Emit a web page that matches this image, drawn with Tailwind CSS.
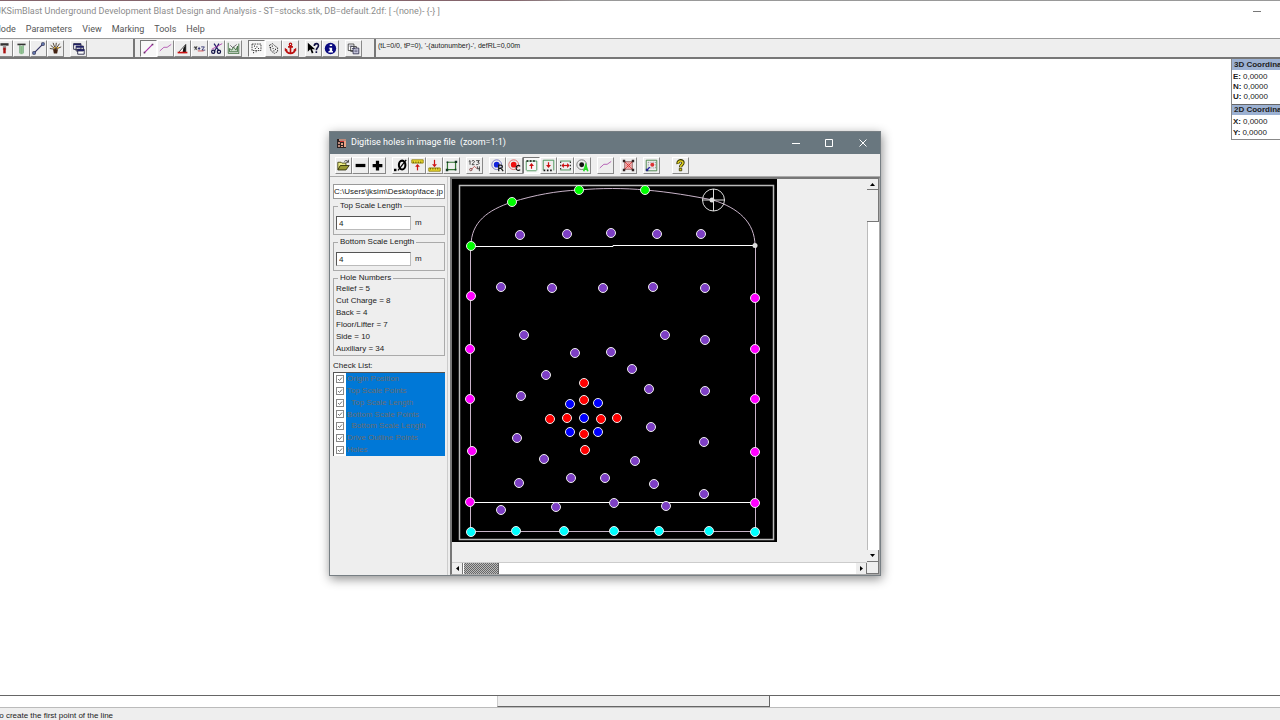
<!DOCTYPE html>
<html lang="en">
<head>
  <meta charset="UTF-8" />
  <meta name="viewport" content="width=device-width, initial-scale=1.0" />
  <title>JKSimBlast Underground Development</title>
  <script src="https://cdn.jsdelivr.net/npm/@tailwindcss/browser@4"></script>
</head>
<body class="bg-white font-['Liberation_Sans',sans-serif] text-[8px] text-[#222]">
  <div class="relative flex h-screen flex-col overflow-hidden">

    <!-- Title bar -->
    <div class="h-px shrink-0 bg-linear-to-r from-[#85656c] from-40% to-[#999] to-45%"></div>
    <header class="flex h-[21px] shrink-0 items-center justify-between overflow-hidden pr-[19px]">
      <h1 class="-ml-[4px] whitespace-pre font-[Roboto,sans-serif] text-[9px] text-[#8c8c8c]">JKSimBlast Underground Development Blast Design and Analysis - ST=stocks.stk, DB=default.2df: [ -(none)- {-} ]</h1>
      <button aria-label="Minimise" class="flex h-4 w-2 items-center"><span class="h-px w-2 bg-[#777]"></span></button>
    </header>

    <!-- Menu -->
    <nav class="-ml-[7px] flex h-4 shrink-0 items-center gap-[10px] font-[Roboto,sans-serif] text-[9px] text-[#555]">
      <a href="#">Mode</a>
      <a href="#">Parameters</a>
      <a href="#">View</a>
      <a href="#">Marking</a>
      <a href="#">Tools</a>
      <a href="#">Help</a>
    </nav>

    <!-- Main toolbar -->
    <div class="flex h-[21px] shrink-0 items-stretch border-t border-b-2 border-t-[#999] border-b-[#777] bg-[#eee]">
      <div class="-ml-1 flex w-[139px] items-center gap-[6px] border-r-2 border-[#777]">
        <div id="bar-a" class="flex"></div>
        <div id="bar-b" class="flex"></div>
      </div>
      <div class="flex items-center gap-[6px] border-r-2 border-[#777] pr-[12px] pl-[5px]">
        <div id="bar-c" class="flex"></div>
        <div id="bar-d" class="flex"></div>
        <div id="bar-e" class="flex"></div>
        <div id="bar-f" class="flex"></div>
      </div>
      <p class="pt-px pl-[2px] text-[7px] leading-[12px]">(tL=0/0, tP=0), '-(autonumber)-', defRL=0,00m</p>
    </div>

    <!-- Workspace -->
    <main class="flex flex-1 items-start justify-end">
      <aside class="w-[49px] overflow-hidden border-b border-l border-[#888] whitespace-nowrap">
        <h2 class="h-[11px] bg-[#9cb1d2] pl-[2px] leading-[11px] font-bold">3D Coordinates</h2>
        <dl class="flex flex-col pt-[2px] pb-[2px] pl-px leading-[10px]">
          <div class="flex gap-[2px]"><dt class="font-bold">E:</dt><dd>0,0000</dd></div>
          <div class="flex gap-[2px]"><dt class="font-bold">N:</dt><dd>0,0000</dd></div>
          <div class="flex gap-[2px]"><dt class="font-bold">U:</dt><dd>0,0000</dd></div>
        </dl>
        <h2 class="h-[11px] border-t border-[#666] bg-[#9cb1d2] pl-[2px] leading-[10px] font-bold">2D Coordinates</h2>
        <dl class="flex flex-col py-px pl-px leading-[11px]">
          <div class="flex gap-[2px]"><dt class="font-bold">X:</dt><dd>0,0000</dd></div>
          <div class="flex gap-[2px]"><dt class="font-bold">Y:</dt><dd>0,0000</dd></div>
        </dl>
      </aside>
    </main>

    <!-- Horizontal scrollbar and status bar -->
    <div class="flex h-[13px] shrink-0 border-t border-b border-t-[#666] border-b-[#bbb] bg-white">
      <div class="ml-[497px] w-[273px] border-r border-b border-l border-r-[#666] border-b-[#666] border-l-[#ccc] bg-[#eee]"></div>
    </div>
    <footer class="h-3 shrink-0 overflow-hidden bg-[#eee] pt-[3px] leading-[10px] whitespace-nowrap">
      <p class="-ml-[3px]">to create the first point of the line</p>
    </footer>

    <!-- Digitise window -->
    <section class="absolute top-[131px] left-[329px] flex h-[445px] w-[552px] flex-col border border-[#777f84] bg-[#eee] shadow-[1px_3px_10px_rgba(0,0,0,0.45)]">
      <header class="flex h-[22px] shrink-0 items-center bg-[#69777f] pl-[7px] text-white">
        <svg class="size-[10px]" viewBox="0 0 10 10">
          <rect x="0" y="1" width="9" height="9" fill="#2b2020" /><path d="M2 1h7v2H2zM1 4h2v2H1zM1 7h2v2H1z" fill="#b9897a" /><path d="M4 5h2v2H4zM7 3h2v6H7zM4 8h2v1H4z" fill="#e9a184" /><path d="M3 3h4v1H3z" fill="#c33" />
        </svg>
        <h2 class="ml-1 flex-1 font-[Roboto,sans-serif] text-[9px] whitespace-pre">Digitise holes in image file  (zoom=1:1)</h2>
        <div class="flex items-center pr-[13px]">
          <button aria-label="Minimise" class="mr-[25px]"><svg class="size-2" viewBox="0 0 8 8"><path d="M0 4.5h8" stroke="#fff" /></svg></button>
          <button aria-label="Maximise" class="mr-[26px]"><svg class="size-2" viewBox="0 0 8 8"><path d="M.5 .5h7v7h-7z" stroke="#fff" fill="none" /></svg></button>
          <button aria-label="Close"><svg class="size-2" viewBox="0 0 8 8"><path d="M.5 .5l7 7M7.500 .5l-7 7" stroke="#fff" /></svg></button>
        </div>
      </header>

      <div class="flex h-[23px] shrink-0 items-center gap-[6px] border-b border-[#aaa] pl-[5px]">
        <div id="bar-g" class="flex"></div>
        <div id="bar-h" class="flex"></div>
        <div id="bar-i" class="flex"></div>
        <div id="bar-j" class="flex"></div>
        <div id="bar-k" class="flex"></div>
        <div id="bar-l" class="flex"></div>
        <div id="bar-m" class="flex"></div>
        <div id="bar-n" class="ml-[6px] flex"></div>
      </div>

      <div class="flex min-h-0 flex-1">
        <!-- Side panel -->
        <form class="flex w-[118px] shrink-0 flex-col border-r border-[#ccc] pt-[7px] pr-[2px] pl-[3px]">
          <input aria-label="Image file" value="C:\Users\jksim\Desktop\face.jp" class="h-[15px] w-full border border-[#999] bg-white outline-none" />

          <fieldset class="mt-[2px] border border-[#aaa] px-[2px] pb-1">
            <legend class="ml-[2px] px-[2px] leading-[10px]"><label for="top">Top Scale Length</label></legend>
            <div class="mt-[5px] flex items-center gap-1">
              <input id="top" value="4" class="h-[14px] w-[75px] border border-[#bbb] border-t-[#555] border-l-[#555] bg-white px-[2px]" />
              <span>m</span>
            </div>
          </fieldset>

          <fieldset class="mt-[2px] border border-[#aaa] px-[2px] pb-1">
            <legend class="ml-[2px] px-[2px] leading-[10px]"><label for="bottom">Bottom Scale Length</label></legend>
            <div class="mt-[5px] flex items-center gap-1">
              <input id="bottom" value="4" class="h-[14px] w-[75px] border border-[#bbb] border-t-[#555] border-l-[#555] bg-white px-[2px]" />
              <span>m</span>
            </div>
          </fieldset>

          <fieldset class="mt-[2px] border border-[#aaa] px-[2px]">
            <legend class="ml-[2px] px-[2px] leading-[10px]">Hole Numbers</legend>
            <ul class="leading-[12px]">
              <li>Relief = 5</li>
              <li>Cut Charge = 8</li>
              <li>Back = 4</li>
              <li>Floor/Lifter = 7</li>
              <li>Side = 10</li>
              <li>Auxiliary = 34</li>
            </ul>
          </fieldset>

          <p class="mt-1 leading-[12px]">Check List:</p>
          <div id="checks" class="grid h-[84px] grid-rows-7 border-t border-l border-[#555] bg-white"></div>
        </form>

        <!-- Image viewport -->
        <div class="ml-[2px] grid min-w-0 flex-1 grid-cols-[1fr_12px] grid-rows-[1fr_12px] border-t-2 border-r border-b border-l-2 border-t-[#777] border-r-[#aaa] border-b-[#aaa] border-l-[#777]">
          <div class="overflow-hidden">
            <svg class="h-[363px] w-[325px]" viewBox="452 179 325 363" fill="none">
              <rect x="452" y="179" width="325" height="363" fill="#000" />
              <rect x="459.500" y="185.500" width="314" height="354" stroke="#bbb" stroke-width="1.500" />
              <path d="M471 246C471 222 488 210 512 202C535 195 556 191 579 190C600 188 625 188 645 190C670 192 692 196 713 200C738 208 755 222 755 246" stroke="#c9b4c9" />
              <path d="M470.500 246V531.500M755.500 246V531.500M471 531.500H755" stroke="#c9b4c9" />
              <path d="M471 246.500H613V245.500H755M471 502.500H755" stroke="#fff" />
              <circle cx="713.500" cy="200" r="11" stroke="#ddd" />
              <path d="M713.500 189v22M702 200h23" stroke="#ddd" />
              <circle cx="712" cy="200" r="2.500" fill="#ddd" />
              <circle cx="755" cy="245.500" r="2.500" fill="#ddd" />
              <g id="holes" stroke="#eee" stroke-width="1"></g>
            </svg>
          </div>
          <div class="flex flex-col bg-white">
            <button aria-label="Scroll up" class="flex h-[11px] items-center justify-center border-r border-b border-[#777] bg-[#eee]"><svg class="h-[3px] w-[5px]" viewBox="0 0 5 3"><path d="M0 3L2.500 0L5 3z" fill="#000" /></svg></button>
            <div class="h-8 border-r border-b border-[#777] bg-[#eee]"></div>
            <div class="flex-1 border-l border-[#bbb]"></div>
            <button aria-label="Scroll down" class="flex h-[12px] items-center justify-center border-r border-b border-[#777] bg-[#eee]"><svg class="h-[3px] w-[5px]" viewBox="0 0 5 3"><path d="M0 0h5L2.500 3z" fill="#000" /></svg></button>
          </div>
          <div class="flex border-t border-[#ccc] bg-white">
            <button aria-label="Scroll left" class="flex w-[11px] items-center justify-center border-r border-[#777] bg-[#eee]"><svg class="h-[5px] w-[3px]" viewBox="0 0 3 5"><path d="M3 0v5L0 2.500z" fill="#000" /></svg></button>
            <div class="ml-px w-[35px] border-r border-[#666] bg-[repeating-conic-gradient(#666_0_25%,#bbb_0_50%)] bg-[length:2px_2px]"></div>
            <div class="flex-1"></div>
            <button aria-label="Scroll right" class="flex w-[11px] items-center justify-center border-r border-[#777] bg-[#eee]"><svg class="h-[5px] w-[3px]" viewBox="0 0 3 5"><path d="M0 0v5L3 2.500z" fill="#000" /></svg></button>
          </div>
          <div class="border-r border-b border-[#777] bg-[#eee]"></div>
        </div>
      </div>
    </section>
  </div>

  <script>
    // 16x16 toolbar icons
    const icons = {
      drillRed: `<path d="M3 3h10" stroke="#333" stroke-width="3"/><path d="M8 4v6" stroke="#999" stroke-width="4"/><path d="M8 7v7" stroke="#a11" stroke-width="3"/>`,
      drillGreen: `<path d="M3 3h10" stroke="#333" stroke-width="2"/><path d="M6 4v10M10 4v10" stroke="#384"/><path d="M8 5v10" stroke="#8b8" stroke-width="3"/>`,
      nodes: `<path d="M3 13L13 3" stroke="#336" stroke-width="1.500"/><path d="M1 12h3v3H1zM12 1h3v3h-3z" fill="#8ae" stroke="#224"/>`,
      blast: `<path d="M8 9L2 4M8 9L5 1M8 9L9 1M8 9L13 2M8 9L15 6M8 9L1 8" stroke="#332211"/><path d="M5 9h6l-1 5H6z" fill="#421"/><path d="M6 6h2v2H6zM10 6h2v2h-2z" fill="#da3"/>`,
      windows: `<path d="M2 2h9v7H2zM5 5h9v6H5zM7 9h8v6H7z" fill="#fff" stroke="#113"/><path d="M2 3h9M5 6h9M7 10h8" stroke="#226" stroke-width="2"/>`,
      line: `<path d="M3 13L13 3" stroke="#a3a" stroke-width="1.500"/><path d="M2 12h2v2H2zM12 2h2v2h-2z" fill="#636"/>`,
      poly: `<path d="M1 11L6 6.500H10L15 3" stroke="#a4a"/>`,
      angle: `<path d="M3 13L12 3v10z" fill="#fff" stroke="#222"/><path d="M9 8l3-5v10H8z" fill="#111"/><path d="M2 13h12" stroke="#c11" stroke-width="2"/>`,
      xyz: `<path d="M2 5l3 5M5 5l-3 5M1 7h4" stroke="#333"/><path d="M6 8h3M7.500 6v4M10 6h4l-3 4h4" stroke="#226"/><path d="M6 11h7" stroke="#c33"/>`,
      cut: `<path d="M5 2l6 9M11 2L5 12" stroke="#226" stroke-width="1.500"/><circle cx="4" cy="12" r="2" stroke="#114" stroke-width="1.500"/><circle cx="11" cy="12" r="2" stroke="#114" stroke-width="1.500"/><path d="M2 9l13-7" stroke="#a3a"/>`,
      chart: `<path d="M1.500 1v13H15M14.500 2v12" stroke="#363"/><path d="M3 12V8l3 2l2-4l3 4l2-5v7z" fill="#cdc" stroke="#363"/><path d="M4 4l3 3l5-4" stroke="#555"/>`,
      select: `<path d="M2.500 2.500h11v8h-11z" stroke="#222" stroke-dasharray="2 1"/><path d="M5 5h1M8 6h1M10 8h1M6 8h1M4 13h1M7 12h1" stroke="#111" stroke-width="1.500"/>`,
      scatter: `<path d="M3 4l4-2l3 3l3 2v5l-4 2l-4-3z" stroke="#222" stroke-dasharray="2 1"/><path d="M6 5h1M7 8h1M10 9h1M8 11h1M4 7h1" stroke="#111" stroke-width="1.500"/>`,
      anchor: `<circle cx="8" cy="3" r="1.500" stroke="#b11" stroke-width="1.500"/><path d="M8 4v10M5 6h6M2 9c1 4 4 5 6 5s5-1 6-5" stroke="#b11" stroke-width="2"/><path d="M1 11V7l4 3zM15 11V7l-4 3z" fill="#b11"/>`,
      whats: `<path d="M1 1v11l3-3l2 5l2-1l-2-4h4z" fill="#000"/><path d="M9 5c0-4 6-4 5 0c0 2-2.500 2-2.500 5M11.500 11.500v2" stroke="#114" stroke-width="2"/>`,
      info: `<circle cx="8" cy="8" r="7" fill="#0a0a80"/><path d="M7 3h3v2H7zM6 7h4v4h1v2H5.500v-2H7V8H6z" fill="#fff"/>`,
      copy: `<path d="M1.500 2.500h7v8h-7zM4.500 5.500h7v6h-7z" fill="#fff" stroke="#333"/><path d="M7.500 7.500h7v7h-7z" fill="#dde" stroke="#224"/><path d="M3 5h4M6 8h4M9 10h4M9 12h4" stroke="#446"/>`,
      open: `<path d="M1 13V4h4l1 1h5v3" fill="#ee8" stroke="#330"/><path d="M1 13.500L4 8h11l-4 5.500z" fill="#993" stroke="#220"/><path d="M9 3c2-2 4-1 5 1M14 1v3h-3" stroke="#222"/>`,
      minus: `<path d="M2 8h12" stroke="#000" stroke-width="4"/>`,
      plus: `<path d="M2 8h12M8 2v12" stroke="#000" stroke-width="4"/>`,
      origin: `<ellipse cx="10" cy="7.500" rx="4" ry="5.500" stroke="#000" stroke-width="2.500"/><path d="M5 14L15 1" stroke="#000" stroke-width="1.500"/><path d="M0 12h3v3H0z" fill="#000"/>`,
      topScale: `<path d="M1 1h14v4H1z" fill="#ed3" stroke="#870"/><path d="M3 3v2M6 3v2M9 3v2M12 3v2" stroke="#550"/><path d="M8 14V8" stroke="#c11" stroke-width="1.500"/><path d="M5 9.500L8 6l3 3.500z" fill="#c11"/>`,
      bottomScale: `<path d="M1 11h14v4H1z" fill="#ed3" stroke="#870"/><path d="M3 11v2M6 11v2M9 11v2M12 11v2" stroke="#550"/><path d="M8 1v6" stroke="#c11" stroke-width="1.500"/><path d="M5 6.500L8 10l3-3.500z" fill="#c11"/>`,
      outline: `<path d="M3 4h10v9H3z" stroke="#373" stroke-width="1.500"/><path d="M1 12h3v3H1zM12 2h3v3h-3zM12 12h2v2h-2zM2 3h2v2H2z" fill="#132"/>`,
      numbers: `<path d="M1 3l1.500-1v5M5 3c0-2 3-1 3 0S5 6 5 7h3M10 2h4l-2 2c3 0 2 3-2 3" stroke="#222"/><path d="M4 13l4-4l3 3" stroke="#b44"/><circle cx="3.500" cy="13" r="1.500" stroke="#733"/><path d="M11.500 9v3h3M14 9v6" stroke="#222"/>`,
      relief: `<circle cx="7" cy="7" r="6" stroke="#66b"/><circle cx="7" cy="7" r="3.500" fill="#12d"/><path d="M9.500 15V7.500h2.500a2 2 0 0 1 0 4h-2.500M12 11l3 4" stroke="#111" stroke-width="1.500"/>`,
      cutHole: `<circle cx="7" cy="7" r="6" stroke="#d55"/><circle cx="7" cy="7" r="3.500" fill="#e11"/><path d="M15 9c-2-2-5-1-5 2s3 4 5 2" stroke="#111" stroke-width="1.500"/>`,
      back: `<path d="M1.500 14V2.500h13V14" stroke="#384"/><path d="M2 2.500h12" stroke="#111" stroke-width="2" stroke-dasharray="2 2"/><path d="M2 14.500h12" stroke="#384"/><path d="M8 12V7" stroke="#c11" stroke-width="1.500"/><path d="M5 8.500L8 5l3 3.500z" fill="#c11"/>`,
      floor: `<path d="M1.500 14V1.500h13V14" stroke="#384"/><path d="M2 14h12" stroke="#111" stroke-width="2" stroke-dasharray="2 2"/><path d="M8 4v4" stroke="#c11" stroke-width="1.500"/><path d="M5 7.500L8 11l3-3.500z" fill="#c11"/>`,
      side: `<path d="M1.500 2.500h13M1.500 13.500h13" stroke="#384"/><path d="M2 3v11M14 3v11" stroke="#333" stroke-width="1.500" stroke-dasharray="2 2"/><path d="M4 8h8" stroke="#c11" stroke-width="1.500"/><path d="M3 8l3-3v6zM13 8l-3-3v6z" fill="#c11"/>`,
      aux: `<circle cx="7" cy="7" r="6" stroke="#666"/><circle cx="7" cy="7" r="3" fill="#111"/><path d="M9.500 15L12 7.500L14.500 15M10 12.500h4" stroke="#2d2" stroke-width="2"/>`,
      erase: `<path d="M3.500 3.500h9v9h-9z" fill="#fcc" stroke="#733"/><path d="M3 3l10 10M13 3L3 13" stroke="#d33"/><path d="M1 1h3v3H1zM12 1h3v3h-3zM1 12h3v3H1zM12 12h3v3h-3z" fill="#322"/><circle cx="8" cy="8" r="2" stroke="#c22"/>`,
      place: `<path d="M1.500 1.500h13v13h-13z" stroke="#373"/><path d="M4 4h9M4 11h9M4 4v8M13 4v8" stroke="#888" stroke-dasharray="1 1"/><circle cx="9" cy="7" r="2.500" fill="#d33"/><path d="M2 14l4-4" stroke="#22a" stroke-width="1.500"/><path d="M1 12h3v3H1z" fill="#228"/>`,
      help: `<path d="M5 6c-1-5 7-5 6-1c0 2-3 2-3 5" stroke="#330" stroke-width="4"/><path d="M5 5.500c0-4 6-4 6-.5c0 2-3 2-3 5" stroke="#dc2" stroke-width="2"/><path d="M6.500 11.500h3v3h-3z" fill="#dc2" stroke="#330"/>`
    };

    const bars = {
      a: ["drillRed", "drillGreen", "nodes", "blast"],
      b: ["windows"],
      c: ["line*", "poly", "angle", "xyz", "cut", "chart"],
      d: ["select*", "scatter", "anchor"],
      e: ["whats", "info"],
      f: ["copy"],
      g: ["open", "minus", "plus"],
      h: ["origin", "topScale", "bottomScale", "outline"],
      i: ["numbers"],
      j: ["relief", "cutHole", "back*", "floor", "side", "aux"],
      k: ["poly"],
      l: ["erase"],
      m: ["place"],
      n: ["help"]
    };

    // a trailing * marks a pressed button
    for (const key in bars) {
      document.getElementById("bar-" + key).innerHTML = bars[key].map(item => {
        const name = item.replace("*", "");
        const edge = item.endsWith("*")
          ? "border-t-[#777] border-l-[#777] border-r-white border-b-white bg-[#f8f8f8]"
          : "border-t-white border-l-white border-r-[#888] border-b-[#888] bg-[#eee]";
        return `<button aria-label="${name}" class="flex size-[17px] items-center justify-center border ${edge}"><svg class="size-[13px]" viewBox="0 0 16 16" fill="none">${icons[name]}</svg></button>`;
      }).join("");
    }

    const checks = ["Origin Position", "Top Scale Points", "  Top Scale Length", "Bottom Scale Points", "  Bottom Scale Length", "Drive Outline Points", "Holes"];
    document.getElementById("checks").innerHTML = checks.map(text => `
      <label class="flex min-h-0 items-center">
        <span class="relative flex w-3 items-center justify-center">
          <input type="checkbox" checked disabled class="size-2 appearance-none border border-[#888] bg-white" />
          <svg class="absolute size-[6px]" viewBox="0 0 6 6" fill="none"><path d="M1 3l1.500 1.500L5 1.500" stroke="#777" /></svg>
        </span>
        <span class="flex h-full flex-1 items-center bg-[#0078d7] pl-px whitespace-pre text-[#6d6d6d]">${text}</span>
      </label>`).join("");

    const holes = {
      "#00ff00": [[471, 246], [512, 202], [579, 190], [645, 190]],
      "#ff00ff": [[471, 296], [470, 349], [470, 399], [472, 451], [470, 502], [755, 298], [755, 349], [755, 399], [755, 452], [755, 503]],
      "#00ffff": [[471, 532], [516, 531], [564, 531], [614, 531], [659, 531], [709, 531], [755, 532]],
      "#ff0000": [[584, 383], [584, 400], [550, 419], [567, 418], [601, 419], [617, 418], [584, 434], [585, 450]],
      "#0000ff": [[570, 404], [598, 403], [584, 418], [570, 432], [598, 432]],
      "#7d3fc4": [
        [520, 235], [567, 234], [611, 233], [657, 234], [701, 234],
        [501, 287], [552, 288], [603, 288], [653, 287], [705, 288],
        [524, 335], [665, 335], [705, 340], [575, 353], [611, 352],
        [546, 375], [632, 369], [521, 396], [649, 389], [705, 391],
        [517, 438], [651, 427], [704, 442], [544, 459], [635, 461],
        [519, 483], [571, 478], [605, 478], [654, 484], [704, 494],
        [501, 510], [556, 507], [614, 503], [666, 506]
      ]
    };
    document.getElementById("holes").innerHTML = Object.entries(holes).map(([color, points]) =>
      points.map(([x, y]) => `<circle cx="${x}" cy="${y}" r="4.500" fill="${color}" />`).join("")
    ).join("");
  </script>
</body>
</html>
